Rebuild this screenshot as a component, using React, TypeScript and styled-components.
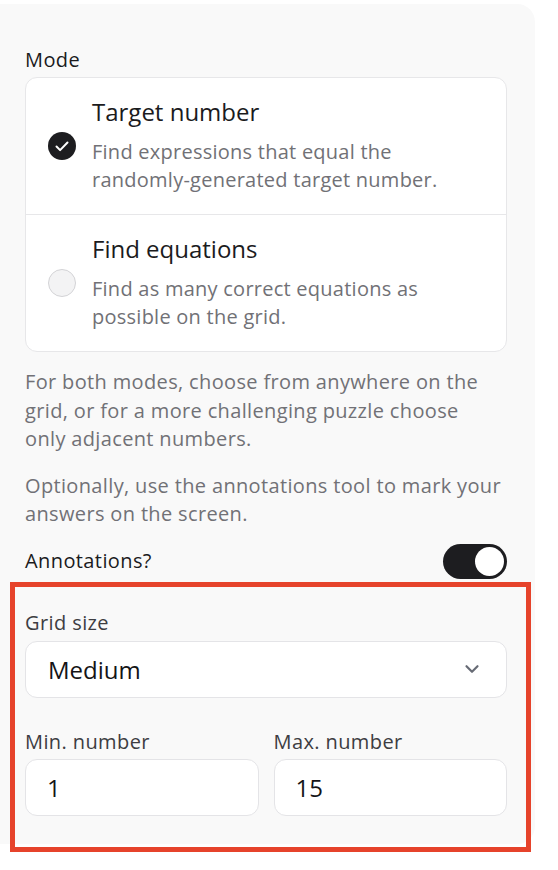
import React from 'react';
import styled, { createGlobalStyle } from 'styled-components';
import { ChevronDown } from 'lucide-react';

const GlobalStyle = createGlobalStyle`
	html, body {
		margin: 0;
		padding: 0;
		background: #ffffff;
	}
	body {
		font-family: "Open Sans", "Noto Sans", sans-serif;
		-webkit-font-smoothing: antialiased;
	}
	* {
		box-sizing: border-box;
	}
`

const NoWrap = styled.span`
	white-space: nowrap;
`

type ModeOption = {
	title: string
	text: React.ReactNode
	checked: boolean
}

const modes: ModeOption[] = [
	{
		title: 'Target number',
		text: <>Find expressions that equal the <NoWrap>randomly-generated</NoWrap> target number.</>,
		checked: true,
	},
	{ title: 'Find equations', text: 'Find as many correct equations as possible on the grid.', checked: false },
]

const CheckIcon = () => (
	<svg width="28" height="28" viewBox="0 0 28 28">
		<circle cx="14" cy="14" r="14" fill="#1d1d20" />
		<path d="M8.5 14.5l3.6 3.6 7.4-7.6" fill="none" stroke="#fff" strokeWidth="2" strokeLinecap="round" strokeLinejoin="round" />
	</svg>
)

export default function App() {
	return (
		<>
			<GlobalStyle />
			<Page>
				<Panel>
					<Label>Mode</Label>
					<ModeCard>
						{modes.map((m) => (
							<ModeRow key={m.title}>
								{m.checked ? <CheckIcon /> : <Radio />}
								<ModeText>
									<ModeTitle>{m.title}</ModeTitle>
									<ModeDesc>{m.text}</ModeDesc>
								</ModeText>
							</ModeRow>
						))}
					</ModeCard>
					<Note>
						For both modes, choose from anywhere on the grid, or for a more challenging puzzle choose{' '}
						<NoWrap>only adjacent</NoWrap> numbers.
					</Note>
					<Note $gap={18}>Optionally, use the annotations tool to mark your answers on the screen.</Note>
					<ToggleRow>
						<Label>Annotations?</Label>
						<Toggle $on>
							<Knob />
						</Toggle>
					</ToggleRow>
					<FieldLabel>Grid size</FieldLabel>
					<Select>
						<span>Medium</span>
						<ChevronDown size={22} strokeWidth={2.4} color="#676b75" />
					</Select>
					<NumberRow>
						<Field>
							<FieldLabel $top={0}>Min. number</FieldLabel>
							<Input>1</Input>
						</Field>
						<Field>
							<FieldLabel $top={0}>Max. number</FieldLabel>
							<Input>15</Input>
						</Field>
					</NumberRow>
				</Panel>
				<Highlight />
			</Page>
		</>
	);
}

const Page = styled.div`
	position: relative;
	width: 558px;
	height: 870px;
	padding-top: 4px;
`

const Panel = styled.div`
	width: 535px;
	background: #f9f9f9;
	border-radius: 0 18px 18px 0;
	padding: 44px 28px 28px 25px;
	display: flex;
	flex-direction: column;
`

const Label = styled.div`
	font-size: 20px;
	letter-spacing: 0.4px;
	line-height: 24px;
	color: #1b1b1d;
`

const ModeCard = styled.div`
	margin-top: 5px;
	background: #ffffff;
	border: 1px solid #e7e7e9;
	border-radius: 12px;
	display: flex;
	flex-direction: column;
`

const ModeRow = styled.div`
	display: flex;
	align-items: center;
	gap: 16px;
	padding: 19px 12px 20px 22px;
	& + & {
		border-top: 1px solid #e7e7e9;
	}
	svg {
		flex-shrink: 0;
	}
`

const Radio = styled.div`
	width: 28px;
	height: 28px;
	border-radius: 50%;
	background: #f3f3f4;
	border: 1px solid #d3d3d6;
	flex-shrink: 0;
`

const ModeText = styled.div`
	display: flex;
	flex-direction: column;
	gap: 11px;
`

const ModeTitle = styled.div`
	font-size: 24px;
	line-height: 30px;
	color: #1b1b1d;
`

const ModeDesc = styled.div`
	font-size: 20px;
	letter-spacing: 0.25px;
	line-height: 28px;
	color: #717176;
`

const Note = styled.p<{ $gap?: number }>`
	margin: ${(p) => p.$gap ?? 16}px 0 0;
	font-size: 20px;
	letter-spacing: 0.35px;
	line-height: 28.5px;
	color: #717176;
`

const ToggleRow = styled.div`
	margin-top: 15px;
	display: flex;
	align-items: center;
	justify-content: space-between;
`

const Toggle = styled.div<{ $on?: boolean }>`
	width: 64px;
	height: 35px;
	border-radius: 18px;
	background: ${(p) => (p.$on ? '#1d1d20' : '#d8d8db')};
	padding: 3px;
	display: flex;
	justify-content: ${(p) => (p.$on ? 'flex-end' : 'flex-start')};
`

const Knob = styled.div`
	width: 29px;
	height: 29px;
	border-radius: 50%;
	background: #ffffff;
`

const FieldLabel = styled.div<{ $top?: number }>`
	margin-top: ${(p) => p.$top ?? 32}px;
	font-size: 20px;
	letter-spacing: 0.4px;
	line-height: 24px;
	color: #3d3d42;
`

const Select = styled.div`
	margin-top: 6px;
	height: 57px;
	background: #ffffff;
	border: 1px solid #e4e4e7;
	border-radius: 12px;
	display: flex;
	align-items: center;
	justify-content: space-between;
	padding: 0 23px 0 22px;
	font-size: 24px;
	color: #141416;
`

const NumberRow = styled.div`
	margin-top: 32px;
	display: grid;
	grid-template-columns: 1fr 1fr;
	gap: 15px;
`

const Field = styled.div`
	display: flex;
	flex-direction: column;
	gap: 5px;
`

const Input = styled.div`
	height: 57px;
	background: #ffffff;
	border: 1px solid #e4e4e7;
	border-radius: 12px;
	display: flex;
	align-items: center;
	padding: 0 21px;
	font-size: 24px;
	color: #141416;
`

const Highlight = styled.div`
	position: absolute;
	left: 10px;
	top: 582px;
	width: 521px;
	height: 270px;
	border: 5px solid #e6432b;
	pointer-events: none;
`
